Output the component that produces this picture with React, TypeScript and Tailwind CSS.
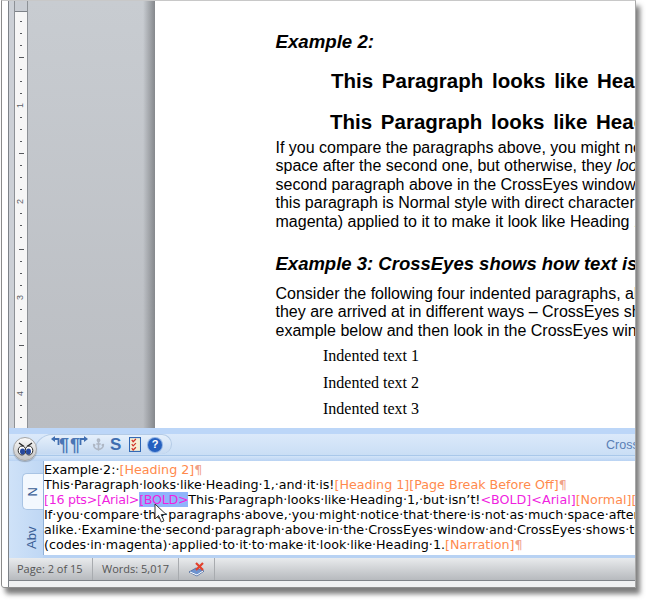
import { AnchorIcon } from "lucide-react"

const ARIAL = "font-['Liberation_Sans',Arial,sans-serif]"

const rulerTicks = Array.from({ length: 35 }, (_, i) => i)

const Ruler = () => (
  <div className="flex h-full w-[14px] shrink-0 flex-col overflow-hidden border-x border-[#8d9196] bg-[#f6f6f6]">
    <div className="h-[11px] shrink-0 border-b border-[#7d8288] bg-[#c9cdd3]" />
    <div className="flex flex-col pt-[3px]">
      {rulerTicks.map((i) => {
        const label = i % 8 === 7 ? String((i + 1) / 8) : null
        return (
          <div key={i} className="flex h-[12px] shrink-0 items-center justify-center">
            {label ? (
              <span className={`${ARIAL} -rotate-90 text-[9px] leading-none text-[#5a5f66]`}>{label}</span>
            ) : i % 8 === 3 ? (
              <div className="h-px w-[5px] bg-[#55585c]" />
            ) : (
              <div className="h-px w-[2px] bg-[#55585c]" />
            )}
          </div>
        )
      })}
    </div>
  </div>
)

const DocPage = () => (
  <div className={`${ARIAL} h-full min-w-0 flex-1 overflow-hidden bg-white pl-[120.5px] whitespace-nowrap text-black`}>
    <p className="pt-[31px] text-[18.67px] leading-[20px] font-bold italic">Example 2:</p>
    <p className="mt-[18px] ml-[55.5px] text-[20.500px] leading-[22px] font-bold [word-spacing:3px]">This Paragraph looks like Heading 1</p>
    <p className="mt-[19px] ml-[54.5px] text-[20.500px] leading-[22px] font-bold [word-spacing:3px]">This Paragraph looks like Heading 1</p>
    <div className="mt-[6px] text-[16px] leading-[18.4px]">
      <p>If you compare the paragraphs above, you might notice that</p>
      <p>
        space after the second one, but otherwise, they <em>look</em> alike.
      </p>
      <p>second paragraph above in the CrossEyes window and</p>
      <p>this paragraph is Normal style with direct character formatting</p>
      <p>magenta) applied to it to make it look like Heading 1.</p>
    </div>
    <p className="mt-[23px] text-[18.5px] leading-[20px] font-bold italic">Example 3: CrossEyes shows how text is formatted</p>
    <div className="mt-[11px] text-[16px] leading-[18.4px]">
      <p>Consider the following four indented paragraphs, all of which</p>
      <p>they are arrived at in different ways – CrossEyes shows</p>
      <p>example below and then look in the CrossEyes window</p>
    </div>
    <div className="mt-[3px] ml-[47.5px] font-['Liberation_Serif',serif] text-[16px] leading-[26.3px]">
      <p>Indented text 1</p>
      <p>Indented text 2</p>
      <p>Indented text 3</p>
    </div>
  </div>
)

const EyesButton = () => (
  <div className="absolute top-[3px] left-[4px] flex h-[24px] w-[24px] items-center justify-center rounded-full border border-[#a5a5a5] bg-gradient-to-b from-[#fafafa] to-[#c4c4c4] shadow-[0_1px_1px_rgba(0,0,0,0.25)]">
    <svg width="17" height="14" viewBox="0 0 17 14">
      <path d="M2 1l5 3.500M15 1l-5 3.500" stroke="#222" strokeWidth="1.300" fill="none" />
      <ellipse cx="5" cy="8.500" rx="3.800" ry="4.500" fill="#fff" stroke="#222" strokeWidth="1" />
      <ellipse cx="12" cy="8.500" rx="3.800" ry="4.500" fill="#fff" stroke="#222" strokeWidth="1" />
      <ellipse cx="5.500" cy="9.500" rx="2.500" ry="3" fill="#27489c" />
      <ellipse cx="11.500" cy="9.500" rx="2.500" ry="3" fill="#27489c" />
    </svg>
  </div>
)

const ArrowLeft = () => (
  <svg width="9" height="10" viewBox="0 0 9 10" className="-mr-[1px] shrink-0 self-start">
    <path d="M7.500 9V3H3" stroke="#3f6db0" strokeWidth="1.800" fill="none" />
    <path d="M4 0v6L0 3z" fill="#3f6db0" />
  </svg>
)

const ArrowRight = () => (
  <svg width="9" height="10" viewBox="0 0 9 10" className="-ml-[1px] shrink-0 self-start">
    <path d="M1.500 9V3H6" stroke="#3f6db0" strokeWidth="1.800" fill="none" />
    <path d="M5 0v6l4-3z" fill="#3f6db0" />
  </svg>
)

const Toolbar = () => (
  <div className="relative flex h-[22px] shrink-0 overflow-hidden border-b border-[#a9c8ea] bg-gradient-to-b from-[#dbe9fa] to-[#cadef5]">
    <div className="ml-[25px] flex h-[20px] w-[138px] shrink-0 items-center rounded-tl-[22px] rounded-r-[12px] border-t border-r border-l border-[#b4cbe6] bg-gradient-to-b from-[#e6f0fb] to-[#c6daf2] pl-[16px]">
      <div className="flex h-[18px] w-[17px] shrink-0 items-center">
        <ArrowLeft />
        <span className={`${ARIAL} text-[18px] leading-none font-bold text-[#4a76b5]`}>¶</span>
      </div>
      <div className="ml-[2px] flex h-[18px] w-[16px] shrink-0 items-center">
        <span className={`${ARIAL} text-[18px] leading-none font-bold text-[#4a76b5]`}>¶</span>
        <ArrowRight />
      </div>
      <AnchorIcon className="ml-[6px] h-[13px] w-[13px] shrink-0 text-[#aeb7c4]" strokeWidth={3} />
      <span className={`${ARIAL} ml-[5px] w-[12px] shrink-0 text-[17px] leading-none font-bold text-[#3f6db0]`}>S</span>
      <svg width="12" height="15" viewBox="0 0 13 16" className="ml-[7px] shrink-0">
        <rect x="0.500" y="0.500" width="12" height="15" fill="#f5efd6" stroke="#2f66b3" strokeWidth="1.200" />
        <path d="M3 3l1.500 2 3-3M3 7.500l1.500 2 3-3M3 12l1.500 2 3-3" stroke="#d0322a" strokeWidth="1.300" fill="none" />
      </svg>
      <div className="ml-[7px] flex h-[14px] w-[14px] shrink-0 items-center justify-center rounded-full bg-[#2560bf] ring-1 ring-[#8fb2e4]">
        <span className={`${ARIAL} text-[11px] leading-none font-bold text-white`}>?</span>
      </div>
    </div>
    <span className={`${ARIAL} mt-[5px] ml-[434px] text-[12.5px] leading-none whitespace-nowrap text-[#5a7fb5]`}>CrossEyes</span>
  </div>
)

const Code = ({ c, children }: { c: "o" | "m"; children: string }) => (
  <span className={c === "o" ? "text-[#ff8a4d]" : "text-[#f01fe0]"}>{children}</span>
)
const Pil = () => <span className="text-[#f0a28a]">¶</span>

const TextPane = () => (
  <div className="relative flex h-[97px] shrink-0 bg-[#b8d2f3]">
    <div className="h-full w-[34px] shrink-0 bg-gradient-to-r from-[#cfe2f8] to-[#bfd7f4]">
      <div className="mt-[12px] ml-[13px] flex h-[37px] w-[21px] items-center justify-center rounded-l-[5px] border border-r-0 border-[#a9c4e4] bg-[#f3f8fe]">
        <span className={`${ARIAL} -rotate-90 text-[13px] text-[#3b5f96]`}>N</span>
      </div>
      <div className="mt-[12px] ml-[13px] flex h-[32px] w-[21px] items-center justify-center">
        <span className={`${ARIAL} -rotate-90 text-[13px] text-[#3b5f96]`}>Abv</span>
      </div>
    </div>
    <div className="mb-[3px] min-w-0 flex-1 overflow-hidden border-l border-[#8fb0d8] bg-white pt-[1px] font-['DejaVu_Sans',sans-serif] text-[12.7px] leading-[15px] whitespace-nowrap text-black">
      <p>
        Example·2:·<Code c="o">[Heading 2]</Code>
        <Pil />
      </p>
      <p>
        This·Paragraph·looks·like·Heading·1,·and·it·is!<Code c="o">[Heading 1]</Code>
        <Code c="o">[Page Break Before Off]</Code>
        <Pil />
      </p>
      <p>
        <span className="tracking-[-0.3px]">
          <Code c="m">[16 pts&gt;</Code>
          <Code c="m">[Arial&gt;</Code>
          <span className="bg-[#8fb4fb] text-[#f01fe0]">[BOLD&gt;</span>
        </span>
        This·Paragraph·looks·like·Heading·1,·but·isn’t!<Code c="m">&lt;BOLD]</Code>
        <Code c="m">&lt;Arial]</Code>
        <Code c="o">[Normal]</Code>
        <Code c="o">[Guidance]</Code>
      </p>
      <p>If·you·compare·the·paragraphs·above,·you·might·notice·that·there·is·not·as·much·space·after·the·second·one</p>
      <p>alike.·Examine·the·second·paragraph·above·in·the·CrossEyes·window·and·CrossEyes·shows·that·this</p>
      <p>
        (codes·in·magenta)·applied·to·it·to·make·it·look·like·Heading·1.<Code c="o">[Narration]</Code>
        <Pil />
      </p>
    </div>
    <svg width="14" height="20" viewBox="0 0 14 20" className="absolute top-[42px] left-[145px]">
      <path d="M1 1v15l3.500-3.500 2.800 6.500 2.700-1.200-2.800-6.300h5z" fill="#fff" stroke="#333" strokeWidth="1" />
    </svg>
  </div>
)

const StatusBar = () => (
  <div className="flex h-[23px] shrink-0 items-center border-b border-[#7f8388] bg-gradient-to-b from-[#e9ebed] to-[#b7babe] font-['Open_Sans',sans-serif] text-[11px] text-[#555]">
    <div className="flex h-full w-[84px] shrink-0 items-center border-r border-[#a8abaf] pl-[8px]">Page: 2 of 15</div>
    <div className="flex h-full w-[86px] shrink-0 items-center border-r border-[#a8abaf] pl-[9px]">Words: 5,017</div>
    <div className="flex h-full w-[36px] shrink-0 items-center justify-center border-r border-[#a8abaf]">
      <svg width="18" height="16" viewBox="0 0 18 16">
        <path d="M1 11l7-4 8 3-7 5z" fill="#6d93cf" stroke="#3f5f96" strokeWidth="0.700" />
        <path d="M2 11l7 3 6-4" stroke="#fff" strokeWidth="1" fill="none" />
        <path d="M8 2l7 7M15 2l-7 7" stroke="#e2402c" strokeWidth="2.200" />
      </svg>
    </div>
  </div>
)

export default function App() {
  return (
    <div className="h-[604px] w-[650px] overflow-hidden bg-white pl-px">
      <div className="flex h-[588px] w-[635px] overflow-hidden rounded-bl-[4px] border border-t-[#c8c8c8] border-r-[#a8a8a8] border-b-[#8f8f8f] border-l-[#8a8a8a] bg-[#f0f1f2] shadow-[4px_6px_5px_rgba(70,70,70,0.7)]">
        <div className="h-full w-[6px] shrink-0 bg-white" />
        <div className="flex min-w-0 flex-1 flex-col border-l border-[#7d8288]">
          <div className="flex h-[427px] shrink-0">
            <div className="h-full w-[5px] shrink-0 bg-[#ccd0d6]" />
            <Ruler />
            <div className="flex h-full w-[127px] shrink-0 justify-end bg-gradient-to-b from-[#c8ccd1] to-[#babdc2]">
              <div className="h-full w-[12px] bg-gradient-to-r from-transparent to-[#85888c]" />
            </div>
            <DocPage />
          </div>
          <div className="h-[6px] shrink-0 bg-[#bcd6f8]" />
          <div className="relative shrink-0">
            <Toolbar />
            <div className="h-[5px] bg-gradient-to-b from-[#d3e4f8] to-[#b9d3f3]" />
            <TextPane />
            <EyesButton />
          </div>
          <StatusBar />
        </div>
      </div>
    </div>
  )
}
